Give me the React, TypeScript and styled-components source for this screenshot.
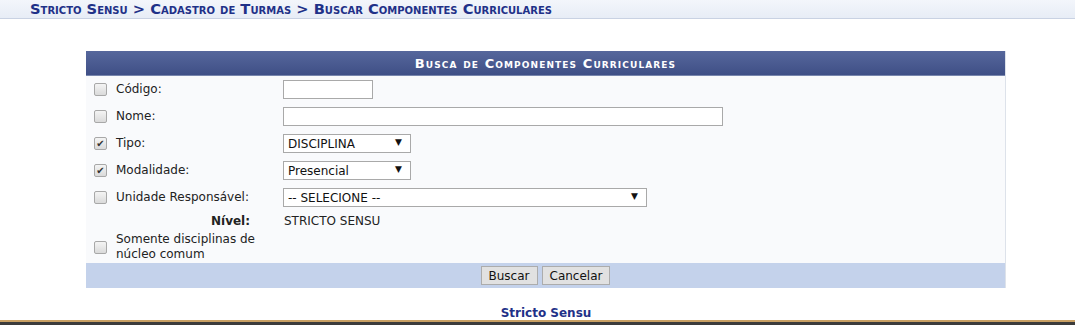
import React from "react";
import styled, { createGlobalStyle } from "styled-components";

const GlobalStyle = createGlobalStyle`
  html, body { margin: 0; padding: 0; background: #ffffff; }
  body { font-family: "DejaVu Sans", Verdana, sans-serif; font-size: 12px; color: #222; }
`;

const Page = styled.div`
  display: flex;
  flex-direction: column;
  width: 1075px;
  min-height: 325px;
`;

const Breadcrumb = styled.div`
  height: 18px;
  line-height: 17px;
  padding-left: 30px;
  background: linear-gradient(#f3f6fb, #e7edf6);
  border-bottom: 1px solid #c9d2e3;
  color: #1f3188;
  font-weight: bold;
  font-variant: small-caps;
  font-size: 14.7px;
  white-space: nowrap;
`;

const Content = styled.div`
  padding: 32px 0 0 86px;
`;

const Panel = styled.div`
  width: 920px;
  background: #f9fafc;
  border-right: 1px solid #dde2ea;
  box-sizing: border-box;
`;

const Caption = styled.div`
  height: 24px;
  line-height: 25px;
  text-align: center;
  color: #ffffff;
  font-weight: bold;
  font-variant: small-caps;
  font-size: 13px;
  letter-spacing: 1.1px;
  background: linear-gradient(#56679c, #3f4f86);
  border-bottom: 1px solid #7886ad;
`;

const FormGrid = styled.div`
  display: grid;
  grid-template-columns: 30px 167px 1fr;
  grid-auto-rows: auto;
`;

const Cell = styled.div<{ $h: number }>`
  display: flex;
  align-items: center;
  height: ${(p) => p.$h}px;
`;

const CheckCell = styled(Cell)`
  padding-left: 8px;
`;

const Label = styled(Cell)`
  color: #222;
  line-height: 15px;
`;

const NivelLabel = styled(Cell)`
  grid-column: 1 / 3;
  justify-content: flex-end;
  padding-right: 33px;
  font-weight: bold;
`;

const NivelValue = styled(Cell)`
  padding-left: 1px;
`;

const Box = styled.span<{ $checked?: boolean }>`
  display: inline-flex;
  align-items: center;
  justify-content: center;
  width: 11px;
  height: 11px;
  border: 1px solid #a8a8a8;
  border-radius: 2px;
  background: linear-gradient(#f4f4f4, #dadada);
  color: #333;
  font-size: 10px;
  line-height: 11px;
`;

const TextInput = styled.input<{ $w: number }>`
  box-sizing: border-box;
  width: ${(p) => p.$w}px;
  height: 19px;
  border: 1px solid #a9a9a9;
  background: #fff;
  padding: 0 3px;
  font: 12px "DejaVu Sans", sans-serif;
`;

const SelectWrap = styled.div<{ $w: number }>`
  position: relative;
  width: ${(p) => p.$w}px;
  height: 19px;
`;

const Select = styled.select`
  appearance: none;
  box-sizing: border-box;
  width: 100%;
  height: 19px;
  border: 1px solid #a9a9a9;
  border-radius: 0;
  background: #fff;
  padding: 0 0 0 4px;
  font: 12px "DejaVu Sans", sans-serif;
  color: #111;
`;

const Arrow = styled.span`
  position: absolute;
  right: 9px;
  top: 3px;
  font-size: 9px;
  color: #111;
  pointer-events: none;
`;

const ButtonBar = styled.div`
  display: flex;
  justify-content: center;
  align-items: center;
  gap: 4px;
  height: 25px;
  background: #c4d2eb;
`;

const Button = styled.button`
  height: 19px;
  padding: 0 7px;
  border: 1px solid #acacac;
  background: #e1e1e1;
  font: 12px "DejaVu Sans", sans-serif;
  color: #111;
  border-radius: 0;
`;

const FooterTitle = styled.div`
  width: 920px;
  margin: 18px 0 0 86px;
  line-height: 14px;
  text-align: center;
  font-weight: bold;
  color: #1f3188;
`;

const BottomBar = styled.div`
  height: 10px;
  border-top: 2px solid #c9a063;
  background: #3b3b3b;
`;

const Check = ({ checked }: { checked?: boolean }) => (
  <Box $checked={checked}>{checked ? "✔" : ""}</Box>
);

const FakeSelect = ({ w, value }: { w: number; value: string }) => (
  <SelectWrap $w={w}>
    <Select defaultValue={value}>
      <option>{value}</option>
    </Select>
    <Arrow>▼</Arrow>
  </SelectWrap>
);

export default function App() {
  return (
    <Page>
      <GlobalStyle />
      <Breadcrumb>Stricto Sensu &gt; Cadastro de Turmas &gt; Buscar Componentes Curriculares</Breadcrumb>
      <Content>
        <Panel>
          <Caption>Busca de Componentes Curriculares</Caption>
          <FormGrid>
            <CheckCell $h={27}><Check /></CheckCell>
            <Label $h={27}>Código:</Label>
            <Cell $h={27}><TextInput $w={90} /></Cell>

            <CheckCell $h={27}><Check /></CheckCell>
            <Label $h={27}>Nome:</Label>
            <Cell $h={27}><TextInput $w={440} /></Cell>

            <CheckCell $h={27}><Check checked /></CheckCell>
            <Label $h={27}>Tipo:</Label>
            <Cell $h={27}><FakeSelect w={128} value="DISCIPLINA" /></Cell>

            <CheckCell $h={27}><Check checked /></CheckCell>
            <Label $h={27}>Modalidade:</Label>
            <Cell $h={27}><FakeSelect w={128} value="Presencial" /></Cell>

            <CheckCell $h={27}><Check /></CheckCell>
            <Label $h={27}>Unidade Responsável:</Label>
            <Cell $h={27}><FakeSelect w={364} value="-- SELECIONE --" /></Cell>

            <NivelLabel $h={20}>Nível:</NivelLabel>
            <NivelValue $h={20}>STRICTO SENSU</NivelValue>

            <CheckCell $h={32}><Check /></CheckCell>
            <Label $h={32}>Somente disciplinas de núcleo comum</Label>
            <Cell $h={32} />
          </FormGrid>
          <ButtonBar>
            <Button>Buscar</Button>
            <Button>Cancelar</Button>
          </ButtonBar>
        </Panel>
      </Content>
      <FooterTitle>Stricto Sensu</FooterTitle>
      <BottomBar />
    </Page>
  );
}
